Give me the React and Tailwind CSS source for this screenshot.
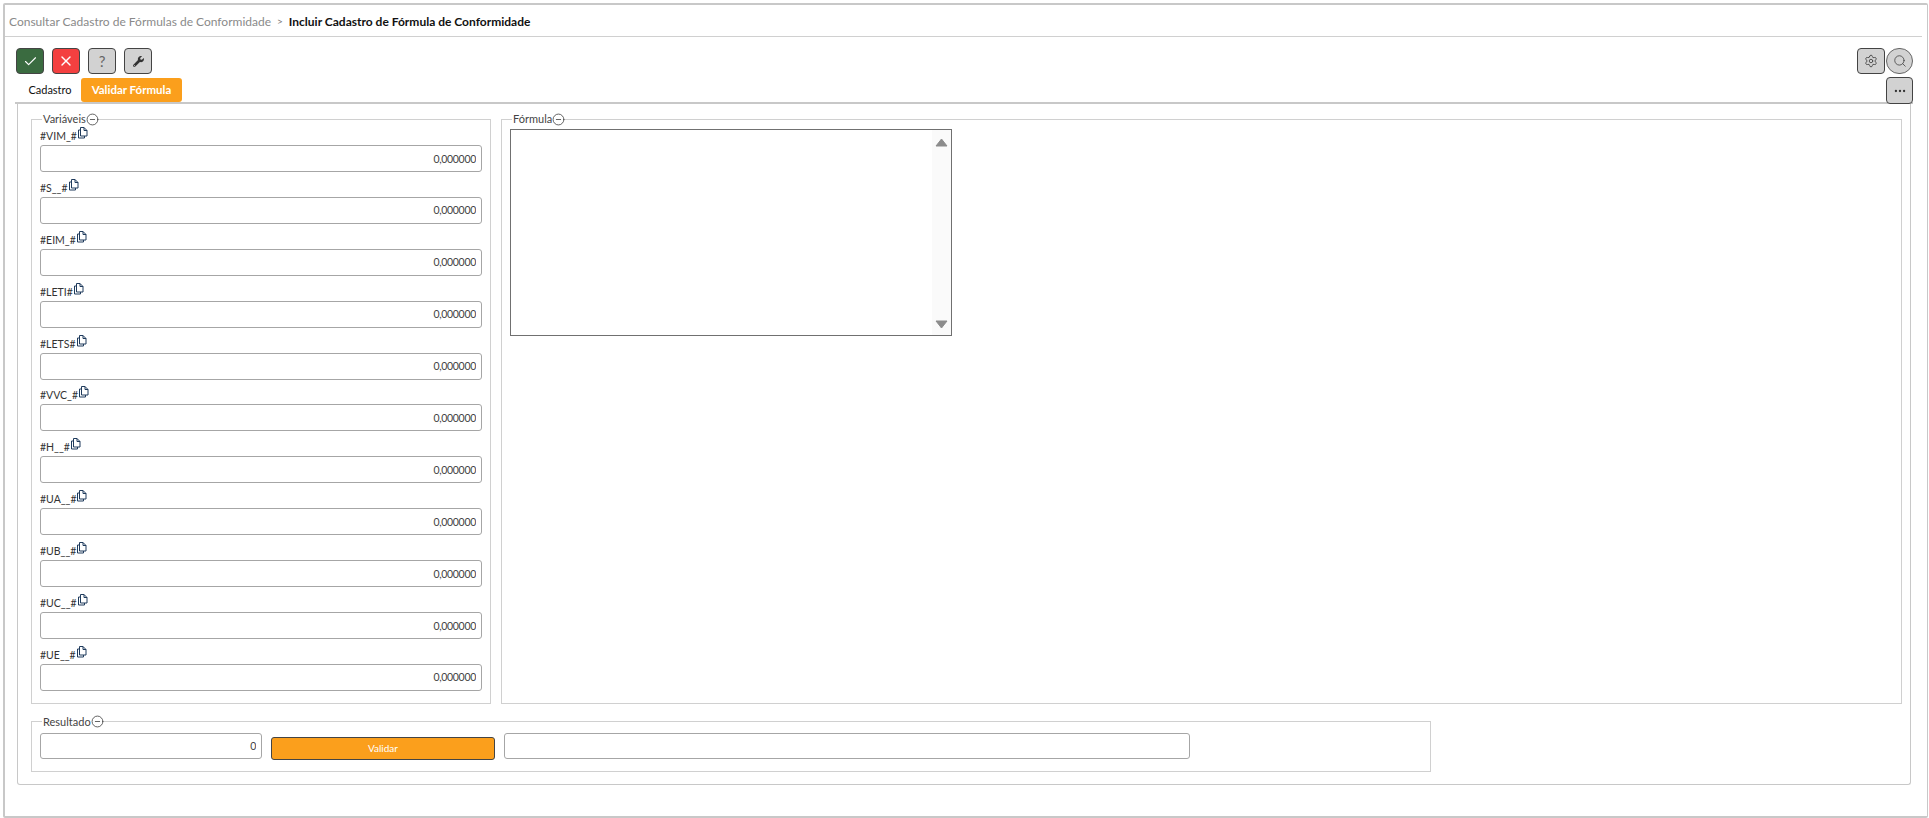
import React from "react";
import { Check, X, Settings, Search, Ellipsis, CircleMinus } from "lucide-react";
import { FaWrench } from "react-icons/fa";

const variaveis = ["#VIM_#", "#S__#", "#EIM_#", "#LETI#", "#LETS#", "#VVC_#", "#H__#", "#UA__#", "#UB__#", "#UC__#", "#UE__#"];

function Legend({ children }) {
  return (
    <legend className="ml-[2px] flex h-4 items-center pl-px text-[11px] leading-4 text-[#444]">
      {children}
      <CircleMinus size={13} strokeWidth={1.4} className="text-[#333]" />
    </legend>
  );
}

function CopyIcon() {
  return (
    <svg width="11" height="12" viewBox="0 0 11 12" fill="none" stroke="#1f3b5c" strokeWidth="1" className="mb-[5px]">
      <path d="M3.5 3 H1.5 V11 H7.5 V9" />
      <path d="M3.5 .5 H7 L10 3.5 V9 H3.5 Z" />
      <path d="M7 .5 V3.5 H10" />
    </svg>
  );
}

function ToolButton({ className, children }) {
  return (
    <button className={`flex h-[26px] w-[28px] items-center justify-center rounded-[4px] border border-[#444] ${className}`}>
      {children}
    </button>
  );
}

function Field({ value, className }) {
  return (
    <input
      readOnly
      value={value}
      className={`rounded-[3px] border border-[#a6a6a6] bg-white pr-[5px] text-right text-[10.5px] tracking-[-0.3px] text-[#444] outline-none ${className}`}
    />
  );
}

export default function App() {
  return (
    <div className="h-[818px] w-[1929px] overflow-hidden bg-white pl-[3px] pt-[3px] font-['Lato',sans-serif]">
      <div className="h-[815px] w-[1925px] rounded-[2px] border-2 border-r border-[#c8c8c8]">
        {/* Breadcrumb */}
        <div className="mr-[5px] flex h-[32px] items-center gap-[6px] border-b border-[#d0d0d0] pl-[4px] pt-[2px] text-[12px]">
          <span className="text-[#8a8a8a]">Consultar Cadastro de Fórmulas de Conformidade</span>
          <span className="text-[10px] text-[#777]">&gt;</span>
          <span className="font-bold text-[#111]">Incluir Cadastro de Fórmula de Conformidade</span>
        </div>

        {/* Toolbar */}
        <div className="box-content flex h-[30px] items-start justify-between pl-[11px] pr-[14px] pt-[11px]">
          <div className="flex gap-2">
            <ToolButton className="bg-[#3a6b40] text-white">
              <Check size={15} strokeWidth={1.8} />
            </ToolButton>
            <ToolButton className="bg-[#f44040] text-white">
              <X size={16} strokeWidth={2} />
            </ToolButton>
            <ToolButton className="bg-[#d2d2d2] text-[15px] text-[#666]">?</ToolButton>
            <ToolButton className="bg-[#d2d2d2] text-[#333]">
              <FaWrench size={11} />
            </ToolButton>
          </div>
          <div className="flex gap-px">
            <ToolButton className="w-[27px] bg-[#d2d2d2] text-[#444]">
              <Settings size={14} strokeWidth={1.5} />
            </ToolButton>
            <button className="flex h-[26px] w-[27px] items-center justify-center rounded-full border border-[#666] bg-[#d2d2d2] text-[#444]">
              <Search size={14} strokeWidth={1.4} />
            </button>
          </div>
        </div>

        {/* Tabs */}
        <div className="ml-[10px] mr-[14px] flex h-[26px] items-stretch justify-between border-b-2 border-[#c8c8c8]">
          <div className="flex">
            <div className="flex w-[66px] items-center justify-center pl-[4px] text-[11px] text-[#111]">Cadastro</div>
            <div className="flex w-[101px] items-center justify-center rounded-[3px] bg-[#fb9f1c] text-[11.5px] font-bold text-white">
              Validar Fórmula
            </div>
          </div>
          <button className="-mt-px flex h-[27px] w-[27px] items-center justify-center rounded-[4px] border border-[#444] bg-[#d2d2d2] text-[#333]">
            <Ellipsis size={14} strokeWidth={2} />
          </button>
        </div>

        {/* Panel */}
        <div className="ml-[12px] h-[681px] w-[1894px] rounded-b-[3px] border border-t-0 border-[#c8c8c8] pl-[13px] pt-[7px]">
          <div className="flex gap-[10px]">
            <fieldset className="w-[460px] border border-[#d0d0d0] px-2 pb-[5px]">
              <Legend>Variáveis</Legend>
              {variaveis.map((v) => (
                <div key={v} className="flex h-[51.9px] flex-col">
                  <div className="flex h-[18px] items-end pb-px text-[10.5px] leading-[16px] text-[#333]">
                    {v}
                    <CopyIcon />
                  </div>
                  <Field value="0,000000" className="h-[27px] w-[442px]" />
                </div>
              ))}
            </fieldset>

            <fieldset className="w-[1401px] border border-[#d0d0d0] px-2">
              <Legend>Fórmula</Legend>
              <div className="relative mt-[2px] h-[207px] w-[442px] border border-[#707070]">
                <textarea className="block h-full w-full resize-none outline-none" />
                <div className="absolute bottom-0 right-0 top-0 flex w-[19px] flex-col items-center justify-between bg-[#fafafa] pb-[6px] pt-[8px]">
                  <svg width="13" height="9" viewBox="0 0 13 9"><path d="M6.5 1 L12 8 L1 8 Z" fill="#8c8c8c" stroke="#8c8c8c" strokeLinejoin="round" /></svg>
                  <svg width="13" height="9" viewBox="0 0 13 9"><path d="M1 1 L12 1 L6.5 8 Z" fill="#8c8c8c" stroke="#8c8c8c" strokeLinejoin="round" /></svg>
                </div>
              </div>
            </fieldset>
          </div>

          {/* Resultado */}
          <fieldset className="mt-[10px] w-[1400px] border border-[#d0d0d0] px-2 pb-[11px] pt-[3px]">
            <Legend>Resultado</Legend>
            <div className="flex items-start">
              <Field value="0" className="h-[26px] w-[222px]" />
              <button className="ml-[9px] mt-[4px] h-[23px] w-[224px] rounded-[3px] border border-[#444] bg-[#fb9f1c] text-[10px] text-white">
                Validar
              </button>
              <Field value="" className="ml-[9px] h-[26px] w-[686px]" />
            </div>
          </fieldset>
        </div>
      </div>
    </div>
  );
}
